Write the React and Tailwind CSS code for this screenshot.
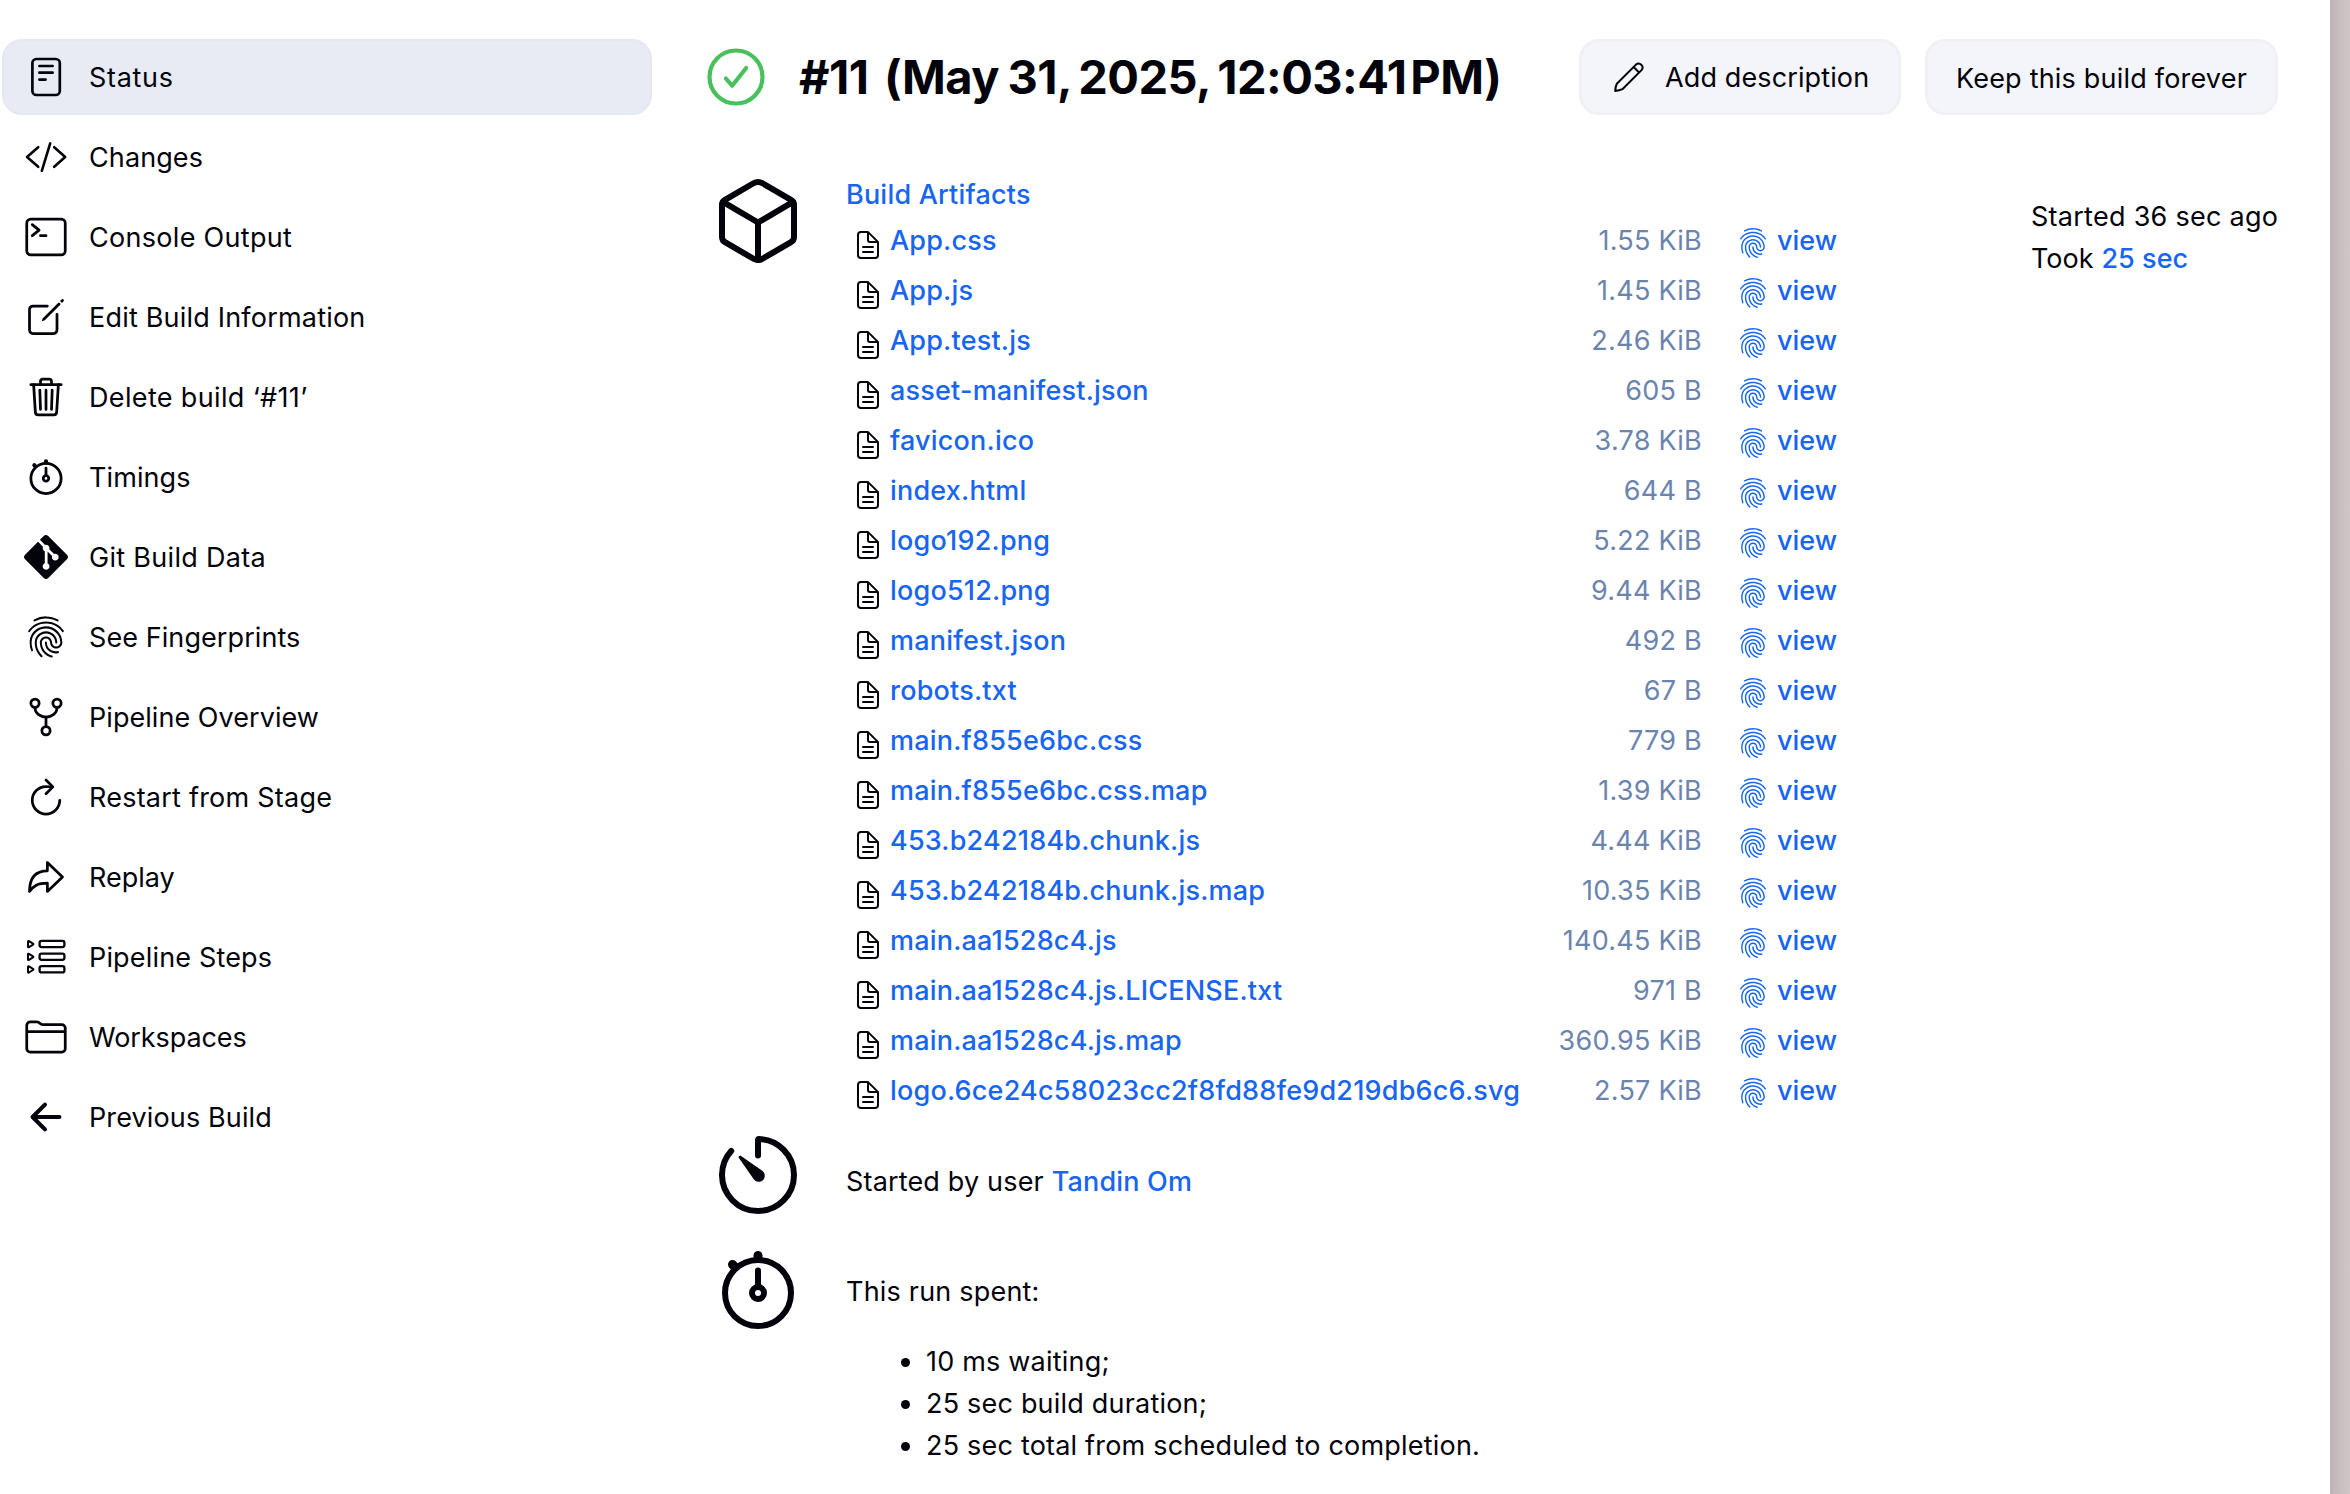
import React from "react";
import {
  IoTerminalOutline,
  IoCreateOutline,
  IoTrashOutline,
  IoStopwatchOutline,
  IoFingerPrintOutline,
  IoGitNetworkOutline,
  IoRefreshOutline,
  IoArrowRedoOutline,
  IoFolderOutline,
  IoArrowBackOutline,
  IoCubeOutline,
  IoTimerOutline,
  IoDocumentTextOutline,
} from "react-icons/io5";
import { SiGit } from "react-icons/si";

const stroke = {
  fill: "none",
  stroke: "currentColor",
  strokeLinecap: "round",
  strokeLinejoin: "round",
};

function StatusIcon({ className }) {
  return (
    <svg viewBox="0 0 44 44" className={className} {...stroke} strokeWidth="2.7">
      <rect x="8.4" y="4" width="27.4" height="36" rx="4" />
      <path d="M15.4 11h13.2M15.4 17.7h13.2M15.4 24.6h6.2" />
    </svg>
  );
}

function CodeIcon({ className }) {
  return (
    <svg viewBox="0 0 44 44" className={className} {...stroke} strokeWidth="2.6">
      <path d="M14.2 12.2 3 22l11.2 9.8M30.2 12.2 41.2 22l-11 9.8M26.2 8.4 17.8 35.8" />
    </svg>
  );
}

function StepsIcon({ className }) {
  return (
    <svg viewBox="0 0 44 44" className={className} {...stroke} strokeWidth="2.3">
      {[5.9, 18.6, 31.2].map((y) => (
        <g key={y}>
          <rect x="15.6" y={y} width="24.8" height="6.2" rx="2" />
          <path
            transform={`translate(0 ${y})`}
            d="M4 .6v5.2c0 .6.5.8 1 .5l4-2.500c.5-.3.5-.8 0-1.100l-4-2.500c-.5-.3-1 0-1 .4z"
            strokeWidth="2"
          />
        </g>
      ))}
    </svg>
  );
}

function PencilIcon({ className }) {
  return (
    <svg viewBox="0 0 30 30" className={className} {...stroke} strokeWidth="2">
      <path d="M1.200 28.900c.2-3 .8-5.400 1.600-7.100L22 2.600a3.900 3.900 0 0 1 5.500 5.500L8.400 27.200c-1.800.9-4.200 1.500-7.200 1.700zM19.600 5l5.500 5.500" />
    </svg>
  );
}

function SuccessIcon({ className }) {
  return (
    <svg viewBox="0 0 58 58" className={className} {...stroke} strokeWidth="4.200">
      <circle cx="29" cy="29" r="26.500" />
      <path d="m18.900 30.500 6.200 7.200L39.200 20" />
    </svg>
  );
}

const NAV = [
  [StatusIcon, "Status", "tracking-[0.7px]"],
  [CodeIcon, "Changes", "tracking-[0.1px]"],
  [IoTerminalOutline, "Console Output", "tracking-[0.3px]"],
  [IoCreateOutline, "Edit Build Information", "tracking-[0.2px]"],
  [IoTrashOutline, "Delete build ‘#11’", "tracking-[0.35px]"],
  [IoStopwatchOutline, "Timings", "tracking-[0.1px]"],
  [SiGit, "Git Build Data", "tracking-[0.3px]"],
  [IoFingerPrintOutline, "See Fingerprints", "tracking-[0.08px]"],
  [IoGitNetworkOutline, "Pipeline Overview", "tracking-[0.05px]"],
  [IoRefreshOutline, "Restart from Stage", "tracking-[0.23px]"],
  [IoArrowRedoOutline, "Replay", "tracking-[0px]"],
  [StepsIcon, "Pipeline Steps", "tracking-[0.17px]"],
  [IoFolderOutline, "Workspaces", "tracking-[-0.08px]"],
  [IoArrowBackOutline, "Previous Build", "tracking-[0.13px]"],
];

const ARTIFACTS = [
  ["App.css", "1.55 KiB"],
  ["App.js", "1.45 KiB"],
  ["App.test.js", "2.46 KiB"],
  ["asset-manifest.json", "605 B"],
  ["favicon.ico", "3.78 KiB"],
  ["index.html", "644 B"],
  ["logo192.png", "5.22 KiB"],
  ["logo512.png", "9.44 KiB"],
  ["manifest.json", "492 B"],
  ["robots.txt", "67 B"],
  ["main.f855e6bc.css", "779 B"],
  ["main.f855e6bc.css.map", "1.39 KiB"],
  ["453.b242184b.chunk.js", "4.44 KiB"],
  ["453.b242184b.chunk.js.map", "10.35 KiB"],
  ["main.aa1528c4.js", "140.45 KiB"],
  ["main.aa1528c4.js.LICENSE.txt", "971 B"],
  ["main.aa1528c4.js.map", "360.95 KiB"],
  ["logo.6ce24c58023cc2f8fd88fe9d219db6c6.svg", "2.57 KiB"],
];

function Sidebar() {
  return (
    <nav className="flex w-[650px] shrink-0 flex-col gap-1">
      {NAV.map(([Icon, label, tracking], i) => (
        <a
          key={label}
          className={
            "flex h-[76px] items-center gap-[21px] rounded-[20px] border-2 pl-5 " +
            (i === 0 ? "border-[#e4e8ef] bg-[#e8ebf4]" : "border-transparent")
          }
        >
          <Icon className="size-11 shrink-0" />
          <span className={"whitespace-nowrap pt-0.5 " + tracking}>{label}</span>
        </a>
      ))}
    </nav>
  );
}

function Header() {
  return (
    <header className="flex h-[76px] items-center">
      <SuccessIcon className="size-[58px] shrink-0 text-[#48c05c]" />
      <h1 className="ml-[34px] whitespace-nowrap text-[47px] font-bold leading-[76px] tracking-[-0.55px] [word-spacing:-3px]">
        <span className="mr-[8px]">#11</span> (May <span className="ml-px">31,</span> 2025, 12:03:41
        <span className="-ml-[3px]">{"\u202f"}PM)</span>
      </h1>
      <div className="ml-auto flex gap-6">
        <button className="flex h-[76px] w-[322px] items-center gap-[21px] rounded-[20px] border-[3px] border-[#f0f1f5] bg-[#f4f5fa] pl-8">
          <PencilIcon className="size-[30px] shrink-0" />
          <span className="whitespace-nowrap pt-0.5 tracking-[0.12px]">Add description</span>
        </button>
        <button className="flex h-[76px] w-[353px] items-center justify-center whitespace-nowrap rounded-[20px] border-[3px] border-[#f0f1f5] bg-[#f4f5fa] pt-[3px]">
          Keep this build forever
        </button>
      </div>
    </header>
  );
}

function ArtifactList() {
  return (
    <ul>
      {ARTIFACTS.map(([name, size]) => (
        <li key={name} className="flex h-[50px] items-center">
          <IoDocumentTextOutline className="ml-[6px] mt-[10px] size-8 shrink-0" />
          <a className="ml-[6px] pt-0.5 font-medium text-[#1765f0]">{name}</a>
          <span className="ml-auto pt-0.5 tracking-[0.25px] text-[#6b84ad]">{size}</span>
          <IoFingerPrintOutline className="ml-[35px] mt-[6px] size-8 shrink-0 text-[#1765f0]" />
          <a className="ml-2 w-[60px] pt-0.5 font-medium tracking-[0px] text-[#1765f0]">view</a>
        </li>
      ))}
    </ul>
  );
}

function Main() {
  return (
    <main className="flex w-[1571px] flex-col">
      <Header />
      <div className="mt-[58px] flex justify-between">
        <div className="flex">
          <IoCubeOutline className="ml-[3px] size-24 shrink-0" />
          <div className="ml-[40px] w-[991px]">
            <a className="block h-[42px] pt-px font-medium text-[#1765f0]">Build Artifacts</a>
            <ArtifactList />
          </div>
        </div>
        <div className="mt-[23px] w-[247px] whitespace-nowrap">
          <p className="tracking-[0.27px]">Started 36 sec ago</p>
          <p className="tracking-[0.05px]">
            Took <a className="font-medium text-[#1765f0]">25 sec</a>
          </p>
        </div>
      </div>
      <div className="mt-3 flex h-24">
        <IoTimerOutline className="ml-[3px] size-24 shrink-0" />
        <p className="ml-[40px] mt-[34px] tracking-[0.17px]">
          Started by user <a className="font-medium text-[#1765f0]">Tandin Om</a>
        </p>
      </div>
      <div className="mt-[19px] flex">
        <IoStopwatchOutline className="ml-[3px] size-24 shrink-0" />
        <div className="ml-[40px] mt-[29px]">
          <p>This run spent:</p>
          <ul className="mt-7">
            {["10 ms waiting;", "25 sec build duration;", "25 sec total from scheduled to completion."].map((t) => (
              <li key={t} className="flex items-center pl-[55px] tracking-[0.2px]">
                <span className="mr-4 size-[9px] rounded-full bg-current" />
                {t}
              </li>
            ))}
          </ul>
        </div>
      </div>
    </main>
  );
}

export default function App() {
  return (
    <div className="flex h-[1494px] w-[2350px] overflow-hidden bg-white font-['Inter',sans-serif] text-[27px] leading-[42px] tracking-[0.2px] text-[#03030c]">
      <div className="flex w-[2330px] shrink-0 gap-[55px] pl-0.5 pt-[39px]">
        <Sidebar />
        <Main />
      </div>
      <div className="w-5 shrink-0 bg-linear-to-r from-[#bdb3b3] via-[#cabfc0] to-[#d1c6c7]" />
    </div>
  );
}
